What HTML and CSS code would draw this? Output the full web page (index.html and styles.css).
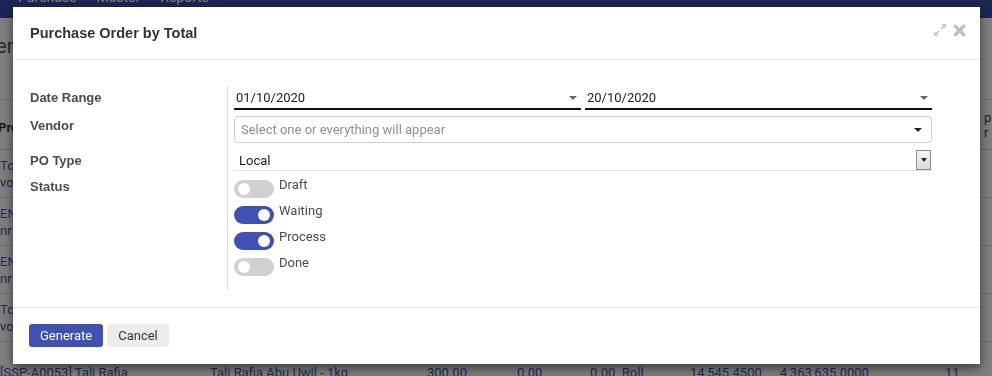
FILE: index.html
```html
<!DOCTYPE html>
<html lang="en">
<head>
  <meta charset="UTF-8">
  <title>Purchase Order by Total</title>
  <link rel="stylesheet" href="styles.css">
</head>
<body>
  <div class="page">
    <div class="navbar">
      <span>Purchase</span>
      <span>Master</span>
      <span>Reports</span>
    </div>
    <div class="control-panel">
      <div class="breadcrumb">Purchase Order</div>
    </div>
    <div class="list">
      <div class="list-head">
        <div class="cell c1">Product</div>
        <div class="cell c-end">p<br>r</div>
      </div>
      <div class="list-row">
        <div class="cell c1 link">Tong Sampah<br>vol 60 Liter</div>
      </div>
      <div class="list-row">
        <div class="cell c1 link">ENG-0012 Baut<br>nr 12 Stainless</div>
      </div>
      <div class="list-row">
        <div class="cell c1 link">ENG-0031 Mur<br>nr 8 Galvanis</div>
      </div>
      <div class="list-row">
        <div class="cell c1 link">Tong Plastik<br>vol 120 Liter</div>
      </div>
      <div class="list-row last">
        <div class="cell c1 link">[SSP-A0053] Tali Rafia</div>
        <div class="cell c2 link">Tali Rafia Abu Uwil - 1kg</div>
        <div class="cell c3 link">300.00</div>
        <div class="cell c4 link">0.00</div>
        <div class="cell c5 link">0.00&nbsp;&nbsp;Roll</div>
        <div class="cell c6 link">14,545.4500</div>
        <div class="cell c7 link">4,363,635.0000</div>
        <div class="cell c8 link">11</div>
      </div>
    </div>
  </div>

  <div class="backdrop"></div>

  <div class="modal">
    <div class="modal-header">
      <div class="modal-title">Purchase Order by Total</div>
      <div class="modal-tools">
        <svg class="tool-icon" width="14" height="14" viewBox="0 0 14 14">
          <path d="M8.2 1H13v4.8l-1.7-1.7-2.6 2.6-1.3-1.3 2.6-2.6z" fill="#c9c9c9"/>
          <path d="M5.8 13H1V8.2l1.7 1.7 2.6-2.6 1.3 1.3-2.6 2.6z" fill="#c9c9c9"/>
        </svg>
        <svg class="tool-icon" width="13" height="13" viewBox="0 0 13 13">
          <path d="M2.2 2.2l8.6 8.6M10.8 2.2l-8.6 8.6" stroke="#bdbdbd" stroke-width="3.2" stroke-linecap="round"/>
        </svg>
      </div>
    </div>

    <div class="modal-body">
      <div class="form-grid">
        <div class="label label-date">Date Range</div>
        <div class="field field-date">
          <div class="date-input">
            <span>01/10/2020</span>
            <span class="caret"></span>
          </div>
          <div class="date-input">
            <span>20/10/2020</span>
            <span class="caret"></span>
          </div>
        </div>

        <div class="label label-vendor">Vendor</div>
        <div class="field field-vendor">
          <div class="vendor-box">
            <span class="placeholder">Select one or everything will appear</span>
            <span class="caret dark"></span>
          </div>
        </div>

        <div class="label label-type">PO Type</div>
        <div class="field field-type">
          <div class="select-box">
            <span>Local</span>
            <span class="select-btn"><span class="caret dark small"></span></span>
          </div>
        </div>

        <div class="label label-status">Status</div>
        <div class="field field-status">
          <div class="toggle-row">
            <span class="toggle"></span>
            <span class="toggle-label">Draft</span>
          </div>
          <div class="toggle-row">
            <span class="toggle on"></span>
            <span class="toggle-label">Waiting</span>
          </div>
          <div class="toggle-row">
            <span class="toggle on"></span>
            <span class="toggle-label">Process</span>
          </div>
          <div class="toggle-row">
            <span class="toggle"></span>
            <span class="toggle-label">Done</span>
          </div>
        </div>
      </div>
    </div>

    <div class="modal-footer">
      <button class="btn btn-primary">Generate</button>
      <button class="btn btn-secondary">Cancel</button>
    </div>
  </div>
</body>
</html>
```

FILE: styles.css
```css
body {
  margin: 0;
  height: 376px;
  overflow: hidden;
  background: #fff;
  font-family: Roboto, 'Liberation Sans', Arial, sans-serif;
  font-size: 13px;
  color: #4c4c4c;
}

/* page behind the dialog */
.page {
  width: 992px;
}
.navbar {
  height: 18px;
  background: #3a4aa8;
  color: #fff;
  display: flex;
  gap: 20px;
  padding-left: 18px;
  overflow: hidden;
}
.navbar span {
  margin-top: -10px;
  line-height: 15px;
  font-size: 14px;
}
.control-panel {
  height: 82px;
  border-bottom: 1px solid #ddd;
  box-sizing: border-box;
}
.breadcrumb {
  font-size: 20px;
  line-height: 24px;
  padding-top: 16px;
  margin-left: -124px;
  color: #555;
}
.list-head {
  height: 50px;
  display: flex;
  align-items: center;
  font-weight: bold;
  color: #333;
  border-bottom: 1px solid #ccc;
  box-sizing: border-box;
  line-height: 15px;
}
.list-head .c1 {
  margin-left: -2px;
  padding-top: 6px;
}
.list-head .c-end {
  margin-left: auto;
  width: 8px;
  overflow: hidden;
  font-weight: normal;
}
.list-row {
  height: 48px;
  display: flex;
  align-items: flex-start;
  padding-top: 7px;
  box-sizing: border-box;
  border-bottom: 1px solid #ddd;
  line-height: 17px;
}
.list-row.last {
  padding-top: 22px;
}
.cell {
  white-space: nowrap;
  overflow: hidden;
}
.link {
  color: #3f51b5;
}
.list-row .c1 { width: 210px; }
.list-row .c2 { width: 217px; }
.list-row .c3 { width: 90px; }
.list-row .c4 { width: 73px; }
.list-row .c5 { width: 100px; }
.list-row .c6 { width: 90px; }
.list-row .c7 { width: 165px; }
.list-row .c8 { width: 30px; }

.backdrop {
  position: fixed;
  inset: 0;
  background: rgba(0, 0, 0, 0.5);
}

/* dialog */
.modal {
  position: absolute;
  left: 13px;
  top: 7px;
  width: 967px;
  height: 357px;
  background: #fff;
  box-shadow: 0 4px 10px rgba(0, 0, 0, 0.55);
  display: flex;
  flex-direction: column;
}
.modal-header {
  height: 53px;
  box-sizing: border-box;
  border-bottom: 1px solid #e8e8e8;
  display: flex;
  align-items: center;
  justify-content: space-between;
  padding: 0 14px 0 17px;
}
.modal-title {
  font-family: 'Liberation Sans', Arial, sans-serif;
  font-size: 14.5px;
  font-weight: bold;
  color: #333;
}
.modal-tools {
  display: flex;
  align-items: center;
  gap: 6px;
  margin-top: -6px;
}
.modal-body {
  flex: 1;
  padding: 26px 48px 0 17px;
  border-bottom: 1px solid #e8e8e8;
}
.form-grid {
  display: grid;
  grid-template-columns: 197px 1fr;
}
.label {
  font-family: 'Liberation Sans', Arial, sans-serif;
  font-weight: bold;
  color: #4c4c4c;
}
.label-date { line-height: 24px; }
.label-vendor { line-height: 20px; }
.label-type { line-height: 21px; }
.label-status { line-height: 20px; }

.field {
  border-left: 1px solid #ddd;
  padding-left: 6px;
}
.field-date {
  display: flex;
  gap: 4px;
  padding-top: 1px;
  padding-bottom: 6px;
}
.date-input {
  flex: 1;
  height: 21px;
  line-height: 21px;
  border-bottom: 2px solid #111;
  padding: 0 4px 0 2px;
  display: flex;
  justify-content: space-between;
  align-items: center;
  color: #222;
}
.caret {
  width: 0;
  height: 0;
  border-left: 4px solid transparent;
  border-right: 4px solid transparent;
  border-top: 4px solid #666;
}
.caret.dark {
  border-top-color: #222;
}
.caret.small {
  border-left-width: 3px;
  border-right-width: 3px;
  border-top-width: 4px;
}
.field-vendor {
  padding-bottom: 7px;
}
.vendor-box {
  height: 27px;
  box-sizing: border-box;
  border: 1px solid #ccc;
  border-radius: 4px;
  padding: 0 9px 0 6px;
  display: flex;
  align-items: center;
  justify-content: space-between;
}
.placeholder {
  color: #8f8f8f;
}
.field-type {
  padding-bottom: 6px;
}
.select-box {
  height: 21px;
  box-sizing: border-box;
  border-bottom: 1px solid #ddd;
  padding-left: 5px;
  display: flex;
  align-items: center;
  justify-content: space-between;
  color: #222;
}
.select-btn {
  width: 15px;
  height: 20px;
  box-sizing: border-box;
  margin-right: 1px;
  border: 1px solid #8c8c8c;
  background: linear-gradient(#f6f6f6, #dadada);
  display: flex;
  align-items: center;
  justify-content: center;
}
.field-status {
  padding-top: 3px;
  padding-bottom: 6px;
}
.toggle-row {
  height: 26px;
  display: flex;
  align-items: flex-start;
}
.toggle {
  position: relative;
  width: 40px;
  height: 18px;
  border-radius: 9px;
  background: #d0d0d0;
}
.toggle::after {
  content: '';
  position: absolute;
  top: 3px;
  left: 4px;
  width: 12px;
  height: 12px;
  border-radius: 50%;
  background: #fff;
}
.toggle.on {
  background: #3f51b5;
}
.toggle.on::after {
  left: auto;
  right: 4px;
}
.toggle-label {
  margin-left: 5px;
  margin-top: -2px;
  line-height: 14px;
}

.modal-footer {
  display: flex;
  gap: 4px;
  padding: 16px 16px 17px;
}
.btn {
  height: 23px;
  padding: 0 11px;
  border: none;
  border-radius: 3px;
  font-family: Roboto, 'Liberation Sans', Arial, sans-serif;
  font-size: 13px;
  cursor: pointer;
}
.btn-primary {
  background: #3f51b5;
  color: #fff;
}
.btn-secondary {
  background: #ececec;
  color: #333;
}
```
